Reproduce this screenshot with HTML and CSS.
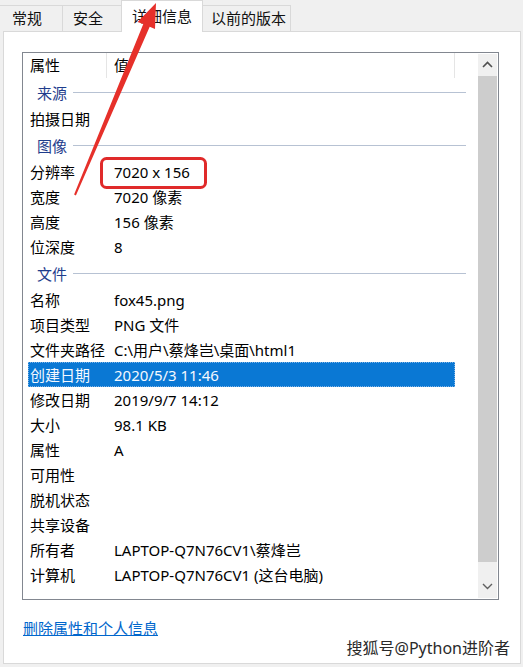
FILE: index.html
```html
<!DOCTYPE html>
<html lang="zh-CN">
<head>
    <meta charset="UTF-8">
    <title>属性 - 详细信息</title>
    <link rel="stylesheet" href="styles.css">
</head>
<body>

<div class="tabs">
    <div class="tab tab-general">常规</div>
    <div class="tab tab-security">安全</div>
    <div class="tab tab-details active">详细信息</div>
    <div class="tab tab-versions">以前的版本</div>
</div>

<div class="panel">
    <div class="listbox">
        <div class="list-main">
            <div class="list-head">
                <div class="head-prop">属性</div>
                <div class="head-value">值</div>
                <div class="head-rest"></div>
            </div>
            <div class="rows">
                <div class="group"><span>来源</span><i></i></div>
                <div class="row"><div class="prop">拍摄日期</div><div class="value"></div></div>

                <div class="group"><span>图像</span><i></i></div>
                <div class="row"><div class="prop">分辨率</div><div class="value">7020 x 156</div></div>
                <div class="row"><div class="prop">宽度</div><div class="value">7020 像素</div></div>
                <div class="row"><div class="prop">高度</div><div class="value">156 像素</div></div>
                <div class="row"><div class="prop">位深度</div><div class="value">8</div></div>

                <div class="group"><span>文件</span><i></i></div>
                <div class="row"><div class="prop">名称</div><div class="value">fox45.png</div></div>
                <div class="row"><div class="prop">项目类型</div><div class="value">PNG 文件</div></div>
                <div class="row"><div class="prop">文件夹路径</div><div class="value">C:\用户\蔡烽岂\桌面\html1</div></div>
                <div class="row selected"><div class="prop">创建日期</div><div class="value">2020/5/3 11:46</div></div>
                <div class="row"><div class="prop">修改日期</div><div class="value">2019/9/7 14:12</div></div>
                <div class="row"><div class="prop">大小</div><div class="value">98.1 KB</div></div>
                <div class="row"><div class="prop">属性</div><div class="value">A</div></div>
                <div class="row"><div class="prop">可用性</div><div class="value"></div></div>
                <div class="row"><div class="prop">脱机状态</div><div class="value"></div></div>
                <div class="row"><div class="prop">共享设备</div><div class="value"></div></div>
                <div class="row"><div class="prop">所有者</div><div class="value">LAPTOP-Q7N76CV1\蔡烽岂</div></div>
                <div class="row"><div class="prop">计算机</div><div class="value">LAPTOP-Q7N76CV1 (这台电脑)</div></div>
            </div>
        </div>
        <div class="scrollbar">
            <div class="sb-btn">
                <svg width="11" height="7" viewBox="0 0 11 7"><path d="M1 6 L5.5 1.5 L10 6" fill="none" stroke="#505050" stroke-width="1.6"/></svg>
            </div>
            <div class="sb-thumb"></div>
            <div class="sb-btn sb-down">
                <svg width="11" height="7" viewBox="0 0 11 7"><path d="M1 1 L5.5 5.5 L10 1" fill="none" stroke="#606060" stroke-width="1.4"/></svg>
            </div>
        </div>
    </div>

    <a class="remove-link" href="#">删除属性和个人信息</a>
    <div class="watermark">搜狐号@Python进阶者</div>
</div>

<svg class="annotations" width="523" height="667" viewBox="0 0 523 667">
    <rect x="101.5" y="158.5" width="104" height="29" rx="5" fill="none" stroke="#e02a2a" stroke-width="3"/>
    <polygon points="156,3 155,29 149.7,26.7 75.9,195.4 74.1,194.6 143.3,23.9 137.5,22" fill="#e6302a"/>
</svg>

</body>
</html>
```

FILE: styles.css
```css
body {
    margin: 0;
    padding: 0;
    background-color: #f0f0f0;
    font-family: "Noto Sans", "Noto Sans CJK SC", sans-serif;
    font-size: 15px;
    color: #000;
    position: relative;
    width: 523px;
    height: 667px;
    overflow: hidden;
}

.tabs {
    display: flex;
    align-items: flex-end;
    height: 31px;
    margin-left: -1px;
    position: relative;
    z-index: 2;
}

.tab {
    box-sizing: border-box;
    height: 26px;
    line-height: 24px;
    border: 1px solid #d9d9d9;
    border-bottom: none;
    border-right: none;
    background: #f0f0f0;
    color: #111;
}

.tab-general { width: 63px; padding-left: 12px; }
.tab-security { width: 59px; padding-left: 10px; }
.tab-details { width: 82px; padding-left: 10px; }
.tab-versions { width: 88px; padding-left: 8px; border-right: 1px solid #d9d9d9; }

.tab.active {
    height: 32px;
    line-height: 30px;
    margin-bottom: -1px;
    background: #fff;
    border-right: 1px solid #d9d9d9;
}

.tab.active + .tab {
    border-left: none;
}

.panel {
    box-sizing: border-box;
    margin-left: 3px;
    width: 518px;
    height: 633px;
    background: #fff;
    border: 1px solid #d9d9d9;
    padding: 20px 0 0 18px;
    position: relative;
}

.listbox {
    box-sizing: border-box;
    width: 477px;
    height: 548px;
    border: 1px solid #828790;
    display: flex;
}

.list-main {
    flex: 1;
}

.list-head {
    display: flex;
    height: 25px;
    line-height: 25px;
}

.head-prop {
    box-sizing: border-box;
    width: 84px;
    padding-left: 7px;
    border-right: 1px solid #e5e5e5;
}

.head-value {
    box-sizing: border-box;
    width: 348px;
    padding-left: 7px;
    border-right: 1px solid #e5e5e5;
}

.rows {
    padding-left: 5px;
}

.group {
    display: flex;
    align-items: center;
    width: 438px;
    height: 28px;
    padding-left: 9px;
    box-sizing: border-box;
    color: #1e3c8c;
}

.group i {
    flex: 1;
    height: 1px;
    margin-left: 6px;
    background: #b7c2d3;
}

.row {
    display: flex;
    align-items: center;
    width: 427px;
    height: 25px;
    box-sizing: border-box;
}

.prop {
    width: 86px;
    padding-left: 2px;
    box-sizing: border-box;
    white-space: nowrap;
}

.value {
    white-space: nowrap;
}

.row.selected {
    background: #0a78d4;
    color: #f4f8ff;
    outline: 1px dotted #7fb4e6;
    outline-offset: -1px;
}

.scrollbar {
    width: 19px;
    margin: 1px 1px 1px 0;
    display: flex;
    flex-direction: column;
    background: #f0f0f0;
}

.sb-btn {
    height: 20px;
    display: flex;
    align-items: center;
    justify-content: center;
}

.sb-down {
    height: 36px;
    align-items: flex-end;
    padding-bottom: 8px;
    box-sizing: border-box;
}

.sb-thumb {
    flex: 1;
    margin-top: 2px;
    background: #cdcdcd;
}

.remove-link {
    display: inline-block;
    margin-top: 17px;
    margin-left: 1px;
    color: #0066cc;
    line-height: 22px;
    text-decoration: underline;
}

.watermark {
    text-align: right;
    padding-right: 10px;
    margin-top: -3px;
    font-size: 16px;
    line-height: 24px;
    color: #2a2a2a;
}

.annotations {
    position: absolute;
    left: 0;
    top: 0;
    z-index: 5;
    pointer-events: none;
}
```
